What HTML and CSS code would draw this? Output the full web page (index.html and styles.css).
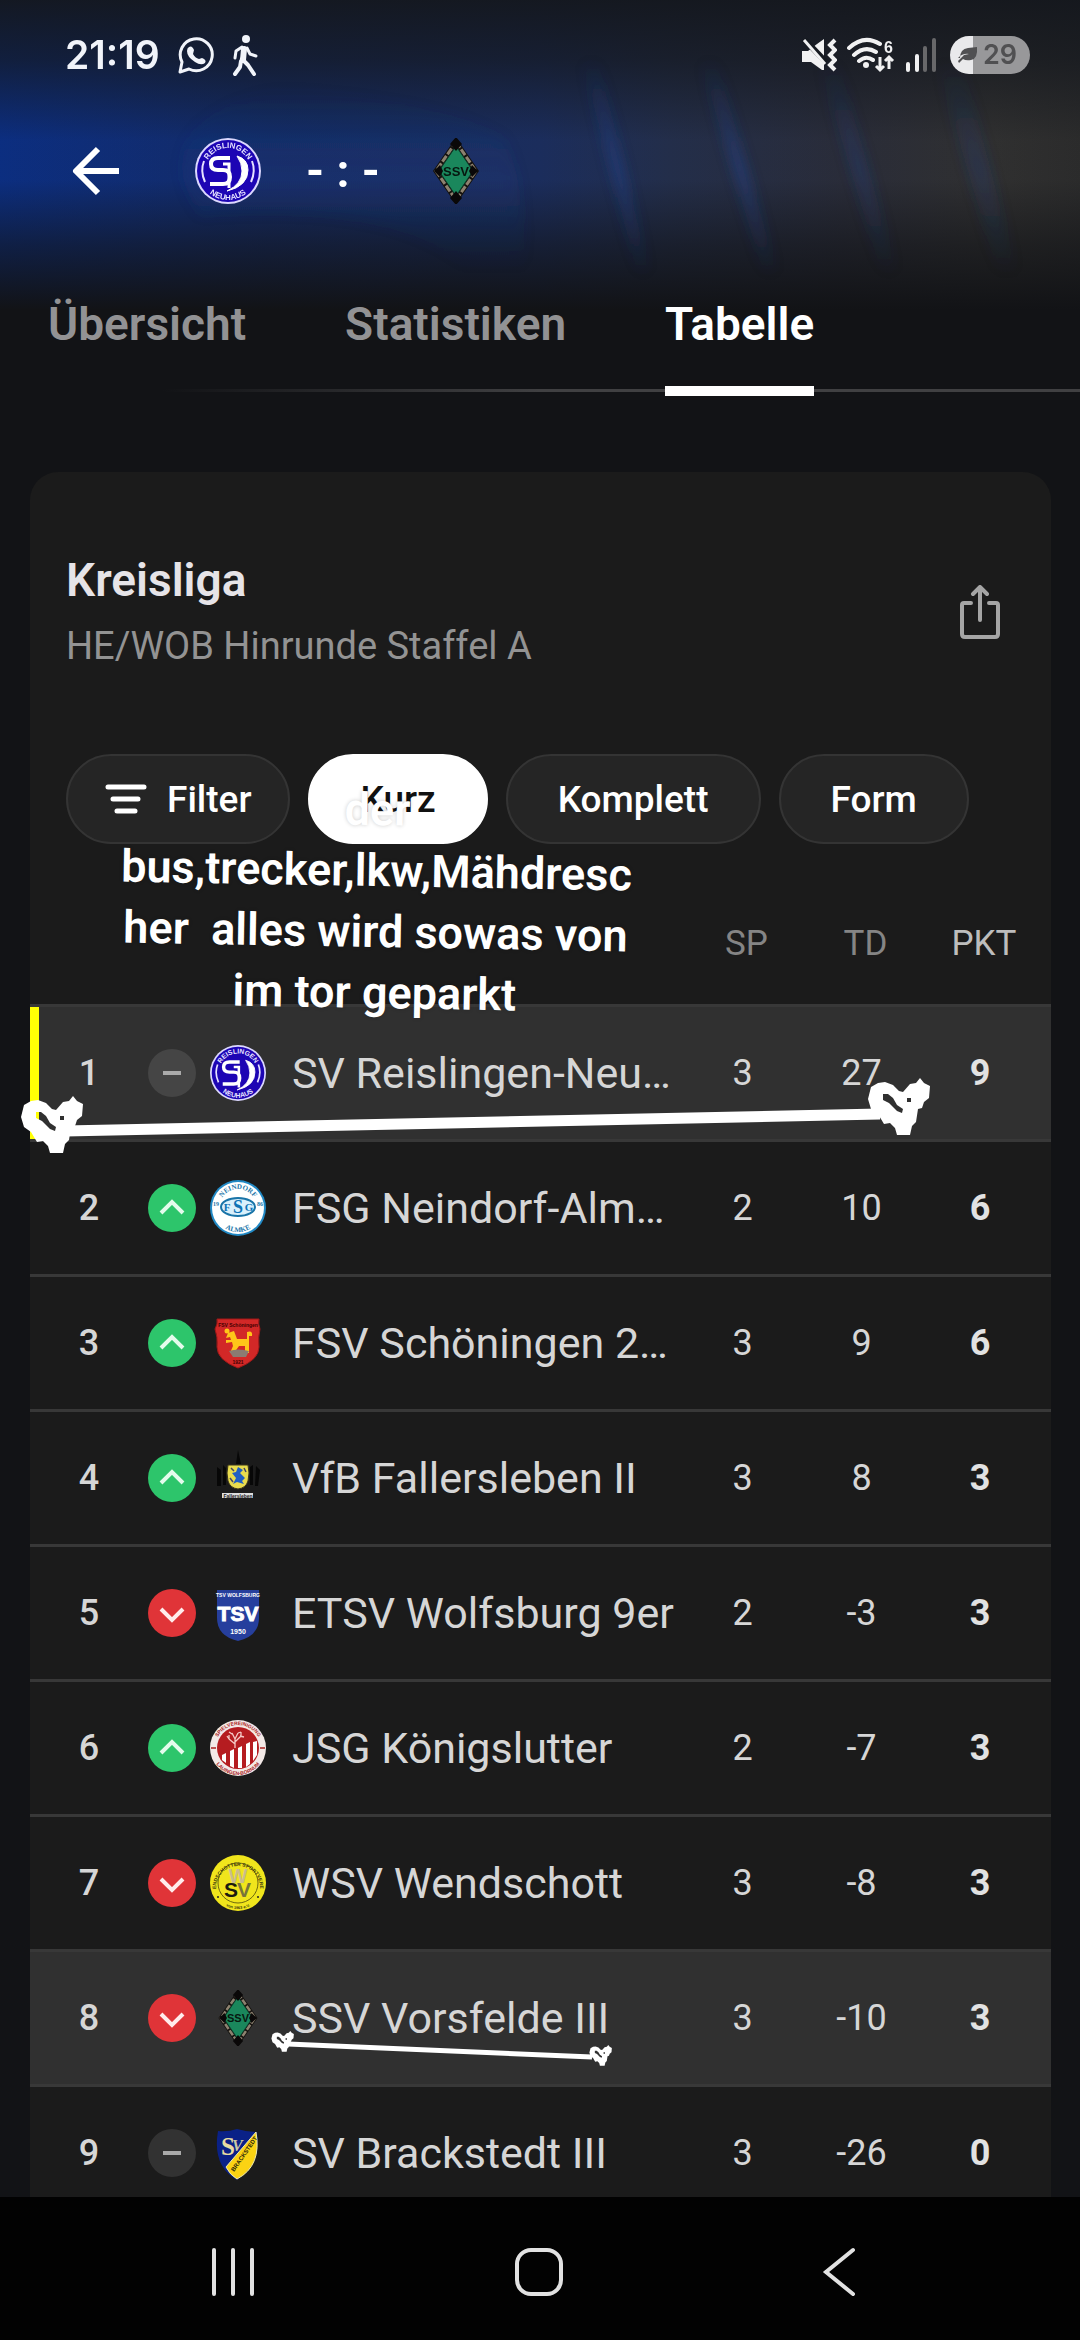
FILE: index.html
```html
<!DOCTYPE html>
<html lang="de">
<head>
<meta charset="utf-8">
<meta name="viewport" content="width=device-width, initial-scale=1">
<title>Kreisliga – Tabelle</title>
<link rel="stylesheet" href="styles.css">
</head>
<body>
<svg class="defs" aria-hidden="true">
  <defs>
    <symbol id="up" viewBox="0 0 48 48"><circle cx="24" cy="24" r="24" fill="#2dc56b"/><path d="M13 29 24 18l11 11" fill="none" stroke="#e4fbec" stroke-width="4"/></symbol>
    <symbol id="down" viewBox="0 0 48 48"><circle cx="24" cy="24" r="24" fill="#e03438"/><path d="M13 20l11 11 11-11" fill="none" stroke="#ffecec" stroke-width="4"/></symbol>
    <symbol id="same" viewBox="0 0 48 48"><circle cx="24" cy="24" r="24" fill="#fff" fill-opacity=".1"/><path d="M15 24h18" stroke="#aaa" stroke-width="4"/></symbol>

    <symbol id="reislingen" viewBox="0 0 66 66">
      <circle cx="33" cy="33" r="33" fill="#dcd8ff"/><circle cx="33" cy="33" r="31" fill="#1d05b4"/>
      <path d="M9 23q-4 10 1 21M57 23q4 10-1 21" fill="none" stroke="#e6e2ff" stroke-width="2"/>
      <path id="rtop" d="M10 33a23 23 0 0 1 46 0" fill="none"/><path id="rbot" d="M4 33a29 29 0 0 0 58 0" fill="none"/>
      <text class="crest-text" font-size="8" fill="#e6e2ff" text-anchor="middle"><textPath href="#rtop" startOffset="50%">REISLINGEN</textPath></text>
      <text class="crest-text" font-size="8" fill="#e6e2ff" text-anchor="middle"><textPath href="#rbot" startOffset="50%">NEUHAUS</textPath></text>
      <path d="M35 20H23q-7 0-7 6t7 6h5q7 0 7 7t-7 7H15" fill="none" stroke="#fff" stroke-width="4"/>
      <path d="M28 26h6v24" fill="none" stroke="#fff" stroke-width="3"/>
      <path d="M42 18q11 3 11 14 0 16-21 21 15-7 15-20 0-8-5-15Z" fill="#fff" stroke="#fff"/>
    </symbol>

    <symbol id="ssv" viewBox="0 0 66 66">
      <path d="M33 4 53 33 33 62 13 33Z" fill="#15845a" stroke="#15120f" stroke-width="5"/>
      <path d="M33 4 53 33 33 62 13 33Z" fill="none" stroke="#8d8270" stroke-width="3" stroke-dasharray="7 2"/>
      <path d="M33 8 50 33 33 58 16 33Z" fill="#1a875c" stroke="#0c3b28" stroke-width="1"/>
      <path d="M33-1l6 7-6 7-6-7ZM33 53l6 7-6 7-6-7ZM11 33l6-6 3 6-3 6ZM55 33l-6-6-3 6 3 6Z" fill="#0a0808"/>
      <text class="crest-text" x="33" y="38" font-size="13" text-anchor="middle" fill="#06170f">SSV</text>
    </symbol>

    <symbol id="neindorf" viewBox="0 0 56 56">
      <circle cx="28" cy="28" r="28" fill="#2189c5"/><circle cx="28" cy="28" r="26" fill="#fff"/>
      <path id="ntop" d="M9 28a19 19 0 0 1 38 0" fill="none"/><path id="nbot" d="M4 28a24 24 0 0 0 48 0" fill="none"/>
      <text class="crest-serif" font-size="7" fill="#1974a8" text-anchor="middle"><textPath href="#ntop" startOffset="50%">NEINDORF</textPath></text>
      <text class="crest-serif" font-size="7" fill="#1974a8" text-anchor="middle"><textPath href="#nbot" startOffset="50%">ALMKE</textPath></text>
      <ellipse cx="28" cy="27" rx="17" ry="9" fill="#d9f0fc" stroke="#1974a8" stroke-width="2"/>
      <text class="crest-serif" x="28" y="33" font-size="18" fill="#0d72b5" text-anchor="middle">S</text>
      <text class="crest-serif" x="17" y="31" font-size="11" fill="#0d72b5" text-anchor="middle">F</text>
      <text class="crest-serif" x="39" y="31" font-size="11" fill="#0d72b5" text-anchor="middle">G</text>
      <text class="crest-serif" x="6" y="26" font-size="6" fill="#1974a8" text-anchor="middle">19</text>
      <text class="crest-serif" x="50" y="26" font-size="6" fill="#1974a8" text-anchor="middle">86</text>
    </symbol>

    <symbol id="schoeningen" viewBox="0 0 56 56">
      <path d="M7 4h42q-1 5 1 10-2 8-1 18 0 13-21 21Q7 45 7 32q1-10-2-18 3-5 2-10Z" fill="#d22827" stroke="#a01818"/>
      <text class="crest-text" x="28" y="12" font-size="5" text-anchor="middle" fill="#400">FSV Schöningen</text>
      <path d="M18 18l6-2 3 8h10v-7q6-2 5 4h-3v17h-4v-7h-6l-5 7h-4l3-7-1-4-6 1v-3h5l-1-3-4 1Z" fill="#ffc619"/><circle cx="17" cy="16" r="2.500" fill="#ffc619"/>
      <path d="M19 36q9-3 20 0l-3 6H23Z" fill="#8b7b72"/>
      <text class="crest-text" x="28" y="49" font-size="5" text-anchor="middle" fill="#400">1921</text>
    </symbol>

    <symbol id="fallersleben" viewBox="0 0 56 56">
      <path d="M7 17l4 3v16H7ZM13 15l3 3v17h-3ZM40 17l3-2v20h-3ZM46 16l4 4-2 16h-3ZM26 14l2-14 3 14Z" fill="#070707"/>
      <path d="M18 15h20q2 8 0 16-2 7-10 8-8-1-10-8-2-8 0-16Z" fill="#e9dc4e" stroke="#39331b"/>
      <path d="M28 17l5 3-3 3 5 5-3 3 2 3-7-2-4 2 3-6-4-5 4-1Z" fill="#205fc4"/>
      <path d="M21 18l3 3M34 18l2 4M20 28l3 4" stroke="#446" stroke-width="1.500"/>
      <path d="M12 43h31v5H12Z" fill="#ddd"/><text class="crest-text" x="28" y="48" font-size="5" text-anchor="middle" fill="#222">Fallersleben</text>
    </symbol>

    <symbol id="wolfsburg" viewBox="0 0 56 56">
      <path d="M7 5h42v28q0 18-21 23Q7 51 7 33Z" fill="#263f9d"/>
      <text class="crest-text" x="28" y="12" font-size="5" text-anchor="middle" fill="#fff">TSV WOLFSBURG</text>
      <text class="crest-text" x="28" y="36" font-size="21" text-anchor="middle" fill="#fff" stroke="#fff" stroke-width="1">TSV</text>
      <text class="crest-text" x="28" y="49" font-size="7" text-anchor="middle" fill="#fff">1950</text>
    </symbol>

    <symbol id="koenigslutter" viewBox="0 0 56 56">
      <circle cx="28" cy="28" r="28" fill="#f3e9e7"/><circle cx="28" cy="28" r="21" fill="#b51c20"/>
      <path id="ktop" d="M5 28a23 23 0 0 1 46 0" fill="none"/><path id="kbot" d="M1 28a27 27 0 0 0 54 0" fill="none"/>
      <text class="crest-text" font-size="5" fill="#a22" text-anchor="middle"><textPath href="#ktop" startOffset="50%">SPIELVEREINIGUNG</textPath></text>
      <text class="crest-text" font-size="5" fill="#a22" text-anchor="middle"><textPath href="#kbot" startOffset="50%">LAUINGEN-BORNUM</textPath></text>
      <path d="M12 35l4-2v10l-4-3ZM20 31l4-2v19l-4-2ZM28 28l4-2v22h-4ZM36 24l4-2v22l-4 3ZM43 22l4-1v14l-4 6Z" fill="#fff"/>
      <path d="M25 28V18M25 24l-6-5M25 22l6-6M25 19l-3-6M25 19l3-6M19 19l-2-3M30 16l4 1M19 19v-4M22 14l-3-2M28 13l3-1M31 16v-4" stroke="#f5c9c6" stroke-width="1.300" fill="none"/>
      <path d="M1 28h5M50 28h5" stroke="#a22" stroke-width="1.500"/>
    </symbol>

    <symbol id="wendschott" viewBox="0 0 56 56">
      <circle cx="28" cy="28" r="28" fill="#f0e51c"/><circle cx="28" cy="28" r="20" fill="none" stroke="#6e690f"/>
      <path id="wtop" d="M6 33a22 22 0 1 1 44 0" fill="none"/><path id="wbot" d="M2 28a26 26 0 0 0 52 0" fill="none"/>
      <text class="crest-text" font-size="5" fill="#3b380c" text-anchor="middle"><textPath href="#wtop" startOffset="50%">WENDSCHOTTER SPORTVEREIN</textPath></text>
      <text class="crest-text" font-size="4" fill="#3b380c" text-anchor="middle"><textPath href="#wbot" startOffset="50%">von 1963 e.V.</textPath></text>
      <text class="crest-text" x="28" y="28" font-size="20" fill="#c9bd8c" text-anchor="middle">W</text>
      <text class="crest-text" x="21" y="42" font-size="21" fill="#1c1b10" text-anchor="middle">S</text>
      <text class="crest-text" x="34" y="42" font-size="21" fill="#77743a" text-anchor="middle">V</text>
      <circle cx="8" cy="42" r="1" fill="#222"/><circle cx="48" cy="42" r="1" fill="#222"/>
    </symbol>

    <symbol id="brackstedt" viewBox="0 0 56 56">
      <path d="M8 6q10 1 19-2 10 3 20 3 4 28-20 48Q2 41 8 6Z" fill="#0a2187"/>
      <path d="M46 7q6 34-19 47-7-4-11-12Z" fill="#fbd313" stroke="#eee9b0"/>
      <text class="crest-serif" x="11" y="30" font-size="25" fill="#e7dca2">S</text>
      <text class="crest-serif" x="22" y="26" font-size="16" fill="#c9c9a6" font-style="italic">V</text>
      <text class="crest-text" font-size="6" fill="#29250c" transform="translate(24 47) rotate(-55)">BRACKSTEDT</text>
    </symbol>

    <symbol id="heart" viewBox="0 0 64 58">
      <path fill="#fff" fill-rule="evenodd" d="M0 21 3 9 10 5 17 4 25 7 31 13 35 14 42 6 48 5 52 0 56 5 62 8 61 20 56 24 54 30 50 31 48 44 44 48 42 57 29 57 27 50 22 45 16 46 10 36 3 31ZM15 16 15 22 21 25 29 33 34 35 35 31 29 27 25 20 20 16ZM39 20v4h4v-4Z"/>
    </symbol>
  </defs>
</svg>

<div class="app">
  <header class="top">
    <svg class="glow" viewBox="0 0 1080 300" preserveAspectRatio="none" aria-hidden="true">
      <defs>
        <filter id="soft" x="-50%" y="-20%" width="200%" height="140%"><feGaussianBlur stdDeviation="6"/></filter>
        <linearGradient id="streak" x1="0" y1="0" x2="0" y2="1"><stop offset="0" stop-color="#22428c" stop-opacity="0"/><stop offset=".5" stop-color="#22428c" stop-opacity=".5"/><stop offset="1" stop-color="#22428c" stop-opacity="0"/></linearGradient>
      </defs>
      <g fill="url(#streak)" filter="url(#soft)">
        <path d="M582 60h16l52 215h-12Z"/><path d="M700 60h16l62 215h-14Z"/><path d="M818 60h20l60 215h-16Z" opacity=".6"/><path d="M936 60h26l56 215h-20Z" opacity=".5"/><path d="M280 85q180 20 225 55 20 40 20 130h-60Q400 200 200 215q-60-90 80-130Z" opacity=".4"/>
      </g>
    </svg>
    <div class="status">
      <span class="clock">21:19</span>
      <svg width="37" height="38" viewBox="0 0 37 38" fill="none" stroke="#f1f4fa"><path d="M2 36l2-10A16 16 0 1 1 11 33Z" stroke-width="3" stroke-linejoin="round"/><path d="M11 11q3-2 5 3l-1 4q2 4 6 5l3-1q5 2 3 5-4 3-10-1-8-5-8-11 0-3 2-4Z" fill="#f1f4fa" stroke="none"/></svg>
      <svg class="walk" width="26" height="42" viewBox="0 0 26 42" fill="none" stroke="#f1f4fa" stroke-width="3" stroke-linecap="round" stroke-linejoin="round"><circle cx="14" cy="5" r="4" fill="#f1f4fa" stroke="none"/><path d="M10 25l6 6 6 9M9 27 8 33l-5 7" stroke-width="4"/><path d="M10 13l-6 4-1 7M15 14l3 6 6 2"/><path d="M12 15l-1 11" stroke-width="6"/></svg>
      <span class="grow"></span>
      <svg width="36" height="34" viewBox="0 0 36 34"><path d="M1 13h6L16 6l7-5v31h-2L10 24H1Z" fill="#f1f1f2"/><path d="M3 1l22 23" stroke="#161a21" stroke-width="6"/><path d="M3 2l21 24" stroke="#f1f1f2" stroke-width="3"/><path d="M34 2l-5 5 5 5-5 5 5 5-5 5 5 5" fill="none" stroke="#f1f1f2" stroke-width="4"/></svg>
      <svg class="wifi" width="48" height="36" viewBox="0 0 48 36" fill="none" stroke="#f1f1f2" stroke-width="4"><path d="M2 11Q17-3 33 7M7 18Q18 8 29 15M12 24q7-6 14-1" stroke-linecap="round"/><circle cx="19" cy="28" r="3" fill="#f1f1f2" stroke="none"/><path d="M33 20v13M29 29l4 4 4-4M42 32V20M38 24l4-4 4 4" stroke-width="3"/><text class="crest-text" x="37" y="16" font-size="16" fill="#f1f1f2" stroke="none">6</text></svg>
      <svg class="signal" width="32" height="36" viewBox="0 0 32 36" stroke-width="4" stroke-linecap="round"><path d="M3 27v6M12 19v14" stroke="#f1f1f2"/><path d="M20 11v22M29 3v30" stroke="#68686a"/></svg>
      <span class="battery"><svg width="20" height="18" viewBox="0 0 20 18"><path d="M2 12Q2 3 10 2l9-1q1 12-6 13-5 1-8-1l-4 4-1-2 6-6 5-1q-6-1-11 4Z" fill="#505052"/></svg>29</span>
    </div>
    <div class="match">
      <button class="back" aria-label="Zurück"><svg width="50" height="50" viewBox="0 0 50 50" fill="none" stroke="#fff" stroke-width="6"><path d="M27 3 5 25l22 22M5 25h43" stroke-linejoin="round"/></svg></button>
      <svg class="club" width="66" height="66"><use href="#reislingen"/></svg>
      <span class="score"><span>-</span><span>:</span><span>-</span></span>
      <svg class="club" width="66" height="66"><use href="#ssv"/></svg>
    </div>
    <nav class="tabs">
      <a href="#uebersicht">Übersicht</a>
      <a href="#statistiken">Statistiken</a>
      <a href="#tabelle" class="active" aria-current="page">Tabelle</a>
    </nav>
  </header>

  <main class="content">
    <section class="card" id="tabelle">
      <div class="card-head">
        <div>
          <h1>Kreisliga</h1>
          <p>HE/WOB Hinrunde Staffel A</p>
        </div>
        <button class="share" aria-label="Teilen"><svg width="40" height="54" viewBox="0 0 40 54" fill="none" stroke="#a5a5a5" stroke-width="4" stroke-linecap="round" stroke-linejoin="round"><path d="M11 18H4q-2 0-2 2v29q0 3 3 3h30q3 0 3-3V20q0-2-2-2h-7M20 35V3M13 9l7-7 7 7"/></svg></button>
      </div>
      <div class="chips">
        <button class="chip filter"><svg width="42" height="30" viewBox="0 0 42 30" stroke="#fff" stroke-width="5" stroke-linecap="round"><path d="M3 3h36M8 15h25M12 27h18"/></svg>Filter</button>
        <button class="chip selected">Kurz</button>
        <button class="chip">Komplett</button>
        <button class="chip">Form</button>
      </div>
      <table class="standings">
        <colgroup><col class="c-rank"><col class="c-trend"><col class="c-crest"><col><col class="c-num"><col class="c-num"><col class="c-points"></colgroup>
        <thead><tr><th></th><th></th><th></th><th></th><th>SP</th><th>TD</th><th class="pts">PKT</th></tr></thead>
        <tbody>
          <tr class="own leader"><td class="rank">1</td><td><svg width="48" height="48"><use href="#same"/></svg></td><td><svg width="56" height="56"><use href="#reislingen"/></svg></td><td class="team">SV Reislingen-Neu…</td><td>3</td><td>27</td><td class="pts">9</td></tr>
          <tr><td class="rank">2</td><td><svg width="48" height="48"><use href="#up"/></svg></td><td><svg width="56" height="56"><use href="#neindorf"/></svg></td><td class="team">FSG Neindorf-Alm…</td><td>2</td><td>10</td><td class="pts">6</td></tr>
          <tr><td class="rank">3</td><td><svg width="48" height="48"><use href="#up"/></svg></td><td><svg width="56" height="56"><use href="#schoeningen"/></svg></td><td class="team">FSV Schöningen 2…</td><td>3</td><td>9</td><td class="pts">6</td></tr>
          <tr><td class="rank">4</td><td><svg width="48" height="48"><use href="#up"/></svg></td><td><svg width="56" height="56"><use href="#fallersleben"/></svg></td><td class="team">VfB Fallersleben II</td><td>3</td><td>8</td><td class="pts">3</td></tr>
          <tr><td class="rank">5</td><td><svg width="48" height="48"><use href="#down"/></svg></td><td><svg width="56" height="56"><use href="#wolfsburg"/></svg></td><td class="team">ETSV Wolfsburg 9er</td><td>2</td><td>-3</td><td class="pts">3</td></tr>
          <tr><td class="rank">6</td><td><svg width="48" height="48"><use href="#up"/></svg></td><td><svg width="56" height="56"><use href="#koenigslutter"/></svg></td><td class="team">JSG Königslutter</td><td>2</td><td>-7</td><td class="pts">3</td></tr>
          <tr><td class="rank">7</td><td><svg width="48" height="48"><use href="#down"/></svg></td><td><svg width="56" height="56"><use href="#wendschott"/></svg></td><td class="team">WSV Wendschott</td><td>3</td><td>-8</td><td class="pts">3</td></tr>
          <tr class="own"><td class="rank">8</td><td><svg width="48" height="48"><use href="#down"/></svg></td><td><svg width="56" height="56"><use href="#ssv"/></svg></td><td class="team">SSV Vorsfelde III</td><td>3</td><td>-10</td><td class="pts">3</td></tr>
          <tr><td class="rank">9</td><td><svg width="48" height="48"><use href="#same"/></svg></td><td><svg width="56" height="56"><use href="#brackstedt"/></svg></td><td class="team">SV Brackstedt III</td><td>3</td><td>-26</td><td class="pts">0</td></tr>
        </tbody>
      </table>
    </section>

    <svg class="marks" viewBox="0 396 1080 1801" preserveAspectRatio="none" aria-hidden="true">
      <path d="M65 1131 880 1114" stroke="#fff" stroke-width="11"/>
      <use href="#heart" x="21" y="1096" width="64" height="58"/>
      <use href="#heart" x="868" y="1078" width="64" height="58"/>
      <path d="M288 2044 592 2057" stroke="#fff" stroke-width="5"/>
      <use href="#heart" x="271" y="2031" width="24" height="21"/>
      <use href="#heart" x="589" y="2045" width="24" height="21"/>
    </svg>
    <div class="note">
      <span>der</span>
      <span>bus,trecker,lkw,Mähdresc</span>
      <span>her  alles wird sowas von</span>
      <span>im tor geparkt</span>
    </div>
  </main>

  <footer class="sysnav">
    <button aria-label="Letzte Apps"><svg width="46" height="50" viewBox="0 0 46 50" stroke="#e2e2e2" stroke-width="4" stroke-linecap="round"><path d="M4 3v44M23 3v44M42 3v44"/></svg></button>
    <button aria-label="Startseite"><svg width="50" height="50" viewBox="0 0 50 50"><rect x="3" y="3" width="44" height="44" rx="14" fill="none" stroke="#e2e2e2" stroke-width="4"/></svg></button>
    <button aria-label="Zurück"><svg width="34" height="50" viewBox="0 0 34 50" fill="none" stroke="#e2e2e2" stroke-width="4" stroke-linecap="round"><path d="M31 3 4 25l27 22"/></svg></button>
  </footer>
</div>
</body>
</html>
```
FILE: styles.css
```css
* { box-sizing: border-box; }

body {
  margin: 0;
  background: #121316;
  color: #d6d6d6;
  font-family: Roboto, "Noto Sans", sans-serif;
}

button {
  margin: 0;
  padding: 0;
  border: 0;
  background: none;
  color: inherit;
  font: inherit;
}

svg { display: block; flex: none; }
.defs { position: absolute; width: 0; height: 0; }
.crest-text { font-family: "Liberation Sans", sans-serif; font-weight: 700; }
.crest-serif { font-family: "Liberation Serif", serif; font-weight: 700; }

.app {
  display: flex;
  flex-direction: column;
  height: 100vh;
  overflow: hidden;
}

/* Header */
.top {
  position: relative;
  flex: none;
  background:
    linear-gradient(180deg, rgba(20, 23, 29, .95) 0, rgba(20, 23, 29, .7) 60px, rgba(18, 19, 22, .1) 140px, rgba(18, 19, 22, .1) 180px, rgba(18, 19, 22, .6) 245px, #121316 310px),
    linear-gradient(90deg, #0b318c 0, #152e6e 25%, #1c3064 50%, #253150 62%, #2c2f3d 78%, #333 92%, #2e2e2e 100%);
}

.glow {
  position: absolute;
  top: 0;
  left: 0;
  width: 100%;
  height: 300px;
}

.status, .match, .tabs { position: relative; display: flex; align-items: center; }

.status { height: 110px; padding: 0 50px 0 65px; }
.clock { margin-right: 18px; color: #f1f4fa; font: 600 39px/48px Inter, sans-serif; }
.walk { margin-left: 17px; }
.grow { flex: 1; }
.wifi { margin-left: 10px; }
.signal { margin: 0 13px 0 10px; }

.battery {
  display: flex;
  align-items: center;
  gap: 5px;
  width: 80px;
  height: 38px;
  padding-left: 8px;
  border-radius: 19px;
  background: linear-gradient(90deg, #e9e9eb 29%, #98989a 29%);
  color: #505052;
  font: 600 27px/38px Inter, sans-serif;
}

.match { height: 122px; padding-left: 71px; }
.back { margin-right: 74px; }

.score {
  display: flex;
  justify-content: space-between;
  width: 74px;
  margin: 0 43px 0 45px;
  color: #fff;
  font-weight: 700;
  font-size: 46px;
  line-height: 54px;
}

.tabs {
  gap: 99px;
  margin-top: 65px;
  padding-left: 48px;
}

.tabs::after {
  content: "";
  position: absolute;
  right: 0;
  bottom: 4px;
  left: 0;
  height: 3px;
  background: linear-gradient(90deg, rgba(64, 64, 66, 0) 15%, #404042 50%);
}

.tabs a {
  position: relative;
  z-index: 1;
  padding-bottom: 35px;
  border-bottom: 10px solid transparent;
  color: #929294;
  font-weight: 600;
  font-size: 46px;
  line-height: 54px;
  text-decoration: none;
}

.tabs .active { border-color: #fff; color: #fff; }

/* Card */
.content {
  position: relative;
  flex: 1;
  min-height: 0;
  padding: 76px 29px 0 30px;
  overflow: hidden;
}

.card {
  padding-top: 81px;
  border-radius: 28px 28px 0 0;
  background: #1b1b1b;
}

.card-head {
  display: flex;
  align-items: center;
  justify-content: space-between;
  padding: 0 51px 0 36px;
}

h1, p { margin: 0; }
h1 { margin-bottom: 15px; color: #e6e4e8; font-weight: 600; font-size: 46px; line-height: 54px; }
.card-head p { color: #939393; font-size: 38px; line-height: 48px; }

.chips { display: flex; gap: 18px; padding: 84px 36px 39px; }

.chip {
  display: flex;
  align-items: center;
  height: 90px;
  padding: 0 50px;
  border: 2px solid #343434;
  border-radius: 45px;
  background: #252525;
  color: #fff;
  font-weight: 500;
  font-size: 37px;
}

.filter { gap: 20px; padding: 0 37px; }
.selected { border-color: #fff; background: #fff; color: #111; }

/* Standings */
.standings {
  width: 100%;
  border-spacing: 0;
  table-layout: fixed;
  font-size: 36px;
}

.c-rank { width: 118px; }
.c-trend { width: 48px; }
.c-crest { width: 84px; }
.c-num { width: 119px; }
.c-points { width: 130px; }

.standings th, .standings td {
  padding: 0;
  border-bottom: 3px solid #383838;
  text-align: center;
}

.standings th { height: 124px; padding-left: 8px; color: #858585; font-weight: 400; font-size: 35px; }
.standings td { height: 135px; }
.standings td svg { margin: 0 auto; }
.standings .pts { padding-right: 12px; color: #e2e2e2; }
.standings th.pts { color: #bdbdbd; }
.standings td.pts { font-weight: 700; }
.standings .rank { font-weight: 500; }
.standings .team { padding-left: 12px; font-size: 43px; text-align: left; white-space: nowrap; }
.own td { background: #303030; }
.leader .rank { box-shadow: inset 9px 0 #ffff05; }

/* Hand-made marks over the table */
.marks {
  position: absolute;
  top: 0;
  left: 0;
  width: 100%;
  height: 1801px;
}

.note {
  position: absolute;
  top: 383px;
  left: 76px;
  display: flex;
  flex-direction: column;
  align-items: center;
  width: 600px;
  color: #fff;
  font-weight: 600;
  font-size: 45px;
  line-height: 61px;
  text-shadow: 0 0 4px rgba(0, 0, 0, .2);
  white-space: pre;
  transform: rotate(1deg);
}

/* System navigation */
.sysnav {
  display: flex;
  flex: none;
  align-items: center;
  justify-content: space-between;
  height: 143px;
  padding: 6px 224px 0 210px;
  background: #020202;
}
```
